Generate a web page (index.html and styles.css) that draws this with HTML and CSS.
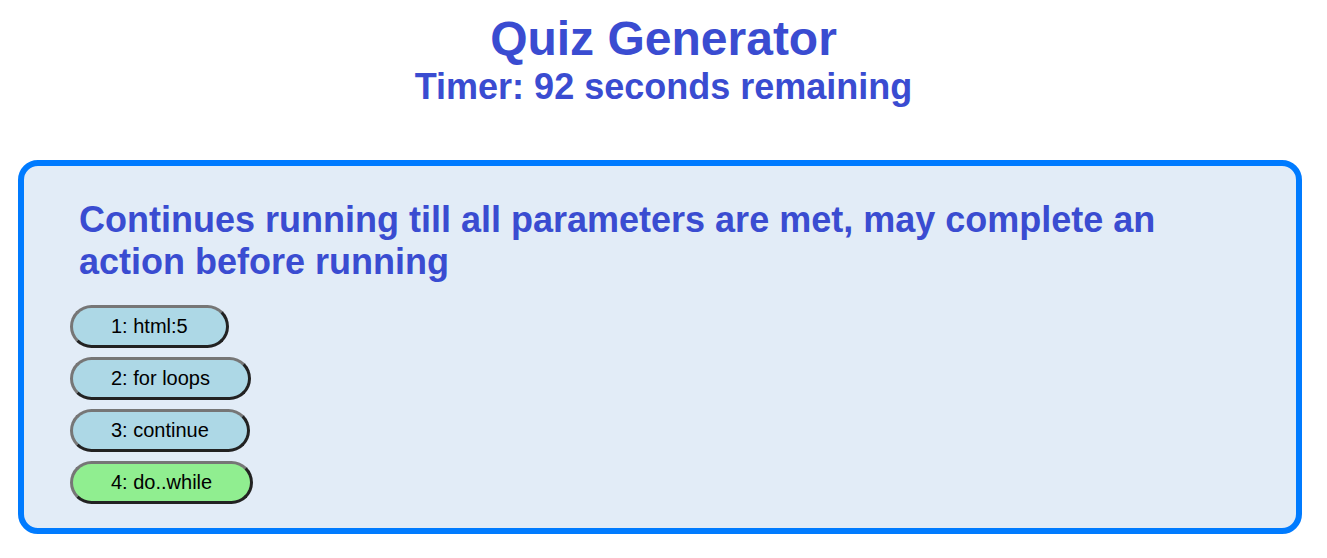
FILE: index.html
```html
<!DOCTYPE html>
<html>
<head>
<meta charset="utf-8">
<link rel="stylesheet" href="styles.css">
</head>
<body>
<header class="header">
  <h1 class="title">Quiz Generator</h1>
  <h2 class="timer">Timer: 92 seconds remaining</h2>
</header>
<main class="quiz">
  <h2 class="question">Continues running till all parameters are met, may complete an action before running</h2>
  <div class="answers">
    <button class="answer">1: html:5</button>
    <button class="answer">2: for loops</button>
    <button class="answer">3: continue</button>
    <button class="answer correct">4: do..while</button>
  </div>
</main>
</body>
</html>
```
FILE: styles.css
```css
body {
  margin: 8px;
  font-family: "Liberation Sans", Arial, sans-serif;
  background: #ffffff;
}
.header {
  text-align: center;
  color: #3a4cd1;
  padding-top: 3px;
}
.title {
  margin: 0;
  font-size: 48px;
  font-weight: bold;
}
.timer {
  margin: 0;
  font-size: 36px;
  font-weight: bold;
}
.quiz {
  margin: 52px 17px 0 10px;
  border: 6px solid #007bff;
  border-radius: 20px;
  background: #e2ecf7;
  padding: 33px 46px 24px;
}
.question {
  margin: 0 0 22px 9px;
  color: #3a4cd1;
  font-size: 36px;
  font-weight: bold;
  max-width: 1160px;
}
.answers {
  display: flex;
  flex-direction: column;
  align-items: flex-start;
  gap: 9px;
}
.answer {
  font-family: "Liberation Sans", Arial, sans-serif;
  font-size: 20px;
  color: #000;
  background: #add8e6;
  padding: 7px 38px;
  border: 3px solid;
  border-color: #767676 #222222 #222222 #767676;
  border-radius: 23px;
  line-height: 23px;
}
.answer.correct {
  background: #90ee90;
}
```
